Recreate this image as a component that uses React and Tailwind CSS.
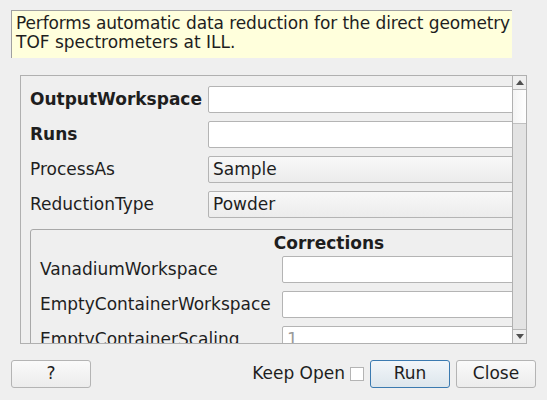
import React from 'react';

const font = { fontFamily: '"DejaVu Sans", Verdana, sans-serif' };

const TextBox = ({ value, className = '' }) => (
  <div
    className={`h-[27px] bg-white border border-[#b4b4b4] rounded-[2px] px-[4px] flex items-center text-[17px] text-[#9a9a9a] ${className}`}
  >
    {value}
  </div>
);

const Combo = ({ value }) => (
  <div className="h-[27px] flex-1 rounded-[2px] border border-[#b4b4b4] bg-gradient-to-b from-[#f8f8f8] to-[#ececec] px-[4px] flex items-center text-[17px] text-[#1e1e1e]">
    {value}
  </div>
);

const Button = ({ children, primary }) => (
  <button
    className={`w-[80px] h-[28px] rounded-[3px] border text-[17px] text-[#1e1e1e] flex items-center justify-center ${
      primary
        ? 'border-[#3b7ab0] bg-gradient-to-b from-[#f2f6f9] to-[#dde6ec]'
        : 'border-[#b4b4b4] bg-gradient-to-b from-[#fafafa] to-[#ececec]'
    }`}
  >
    {children}
  </button>
);

const Row = ({ label, bold, children }) => (
  <div className="flex items-center h-[27px]">
    <div className={`w-[178px] shrink-0 text-[17px] text-[#1e1e1e] whitespace-nowrap ${bold ? 'font-bold' : ''}`}>{label}</div>
    {children}
  </div>
);

const GroupRow = ({ label, value }) => (
  <div className="flex items-center h-[27px]">
    <div className="w-[242px] shrink-0 text-[17px] text-[#1e1e1e] whitespace-nowrap">{label}</div>
    <TextBox className="flex-1" value={value} />
  </div>
);

export default function App() {
  return (
    <div className="w-[547px] h-[400px] bg-[#efefef] flex flex-col overflow-hidden" style={font}>
      <div className="mt-[10px] ml-[11px] w-[501px] h-[48px] bg-[#ffffdc] border-t border-l border-[#a0a0a0] pl-[4px] pr-[2px] pt-[3px] text-[17px] leading-[19px] text-[#1e1e1e]">
        <div className="whitespace-nowrap tracking-[-0.15px] text-justify [text-align-last:justify]">
          Performs automatic data reduction for the direct geometry
        </div>
        <div className="whitespace-nowrap">TOF spectrometers at ILL.</div>
      </div>

      <div className="mt-[17px] ml-[20px] w-[507px] h-[269px] border border-[#b0b0b0] flex">
        <div className="flex-1 overflow-hidden relative">
          <div className="w-[620px] pl-[9px] pt-[10px] flex flex-col gap-[8px]">
            <Row label="OutputWorkspace" bold>
              <TextBox className="flex-1" />
            </Row>
            <Row label="Runs" bold>
              <TextBox className="flex-1" />
            </Row>
            <Row label="ProcessAs">
              <Combo value="Sample" />
            </Row>
            <Row label="ReductionType">
              <Combo value="Powder" />
            </Row>

            <div className="mt-[3px] w-[598px] border border-[#a8a8a8] rounded-[3px] pl-[9px] pr-[9px]">
              <div className="text-center font-bold text-[17px] text-[#1e1e1e] leading-[19px] mt-[4px]">Corrections</div>
              <div className="flex flex-col gap-[8px] mt-[3px]">
                <GroupRow label="VanadiumWorkspace" />
                <GroupRow label="EmptyContainerWorkspace" />
                <GroupRow label="EmptyContainerScaling" value="1" />
              </div>
            </div>
          </div>
        </div>

        <div className="w-[14px] shrink-0 border-l border-[#b0b0b0] flex flex-col bg-[#e3e3e3]">
          <div className="h-[14px] bg-[#efefef] border-b border-[#b8b8b8] flex items-center justify-center">
            <svg width="8" height="5" viewBox="0 0 8 5">
              <path d="M0 5 L4 0 L8 5 Z" fill="#505050" />
            </svg>
          </div>
          <div className="h-[34px] bg-gradient-to-r from-[#f4f4f4] to-[#ffffff] border-b border-[#c0c0c0]" />
          <div className="flex-1" />
          <div className="h-[14px] bg-[#efefef] border-t border-[#b8b8b8] flex items-center justify-center">
            <svg width="8" height="5" viewBox="0 0 8 5">
              <path d="M0 0 L8 0 L4 5 Z" fill="#505050" />
            </svg>
          </div>
        </div>
      </div>

      <div className="mt-[16px] px-[11px] flex items-center">
        <Button>?</Button>
        <div className="flex-1" />
        <span className="text-[17px] text-[#1e1e1e] mr-[5px]">Keep Open</span>
        <div className="w-[14px] h-[14px] bg-white border border-[#b4b4b4] mr-[6px]" />
        <Button primary>Run</Button>
        <div className="w-[6px]" />
        <Button>Close</Button>
      </div>
    </div>
  );
}
